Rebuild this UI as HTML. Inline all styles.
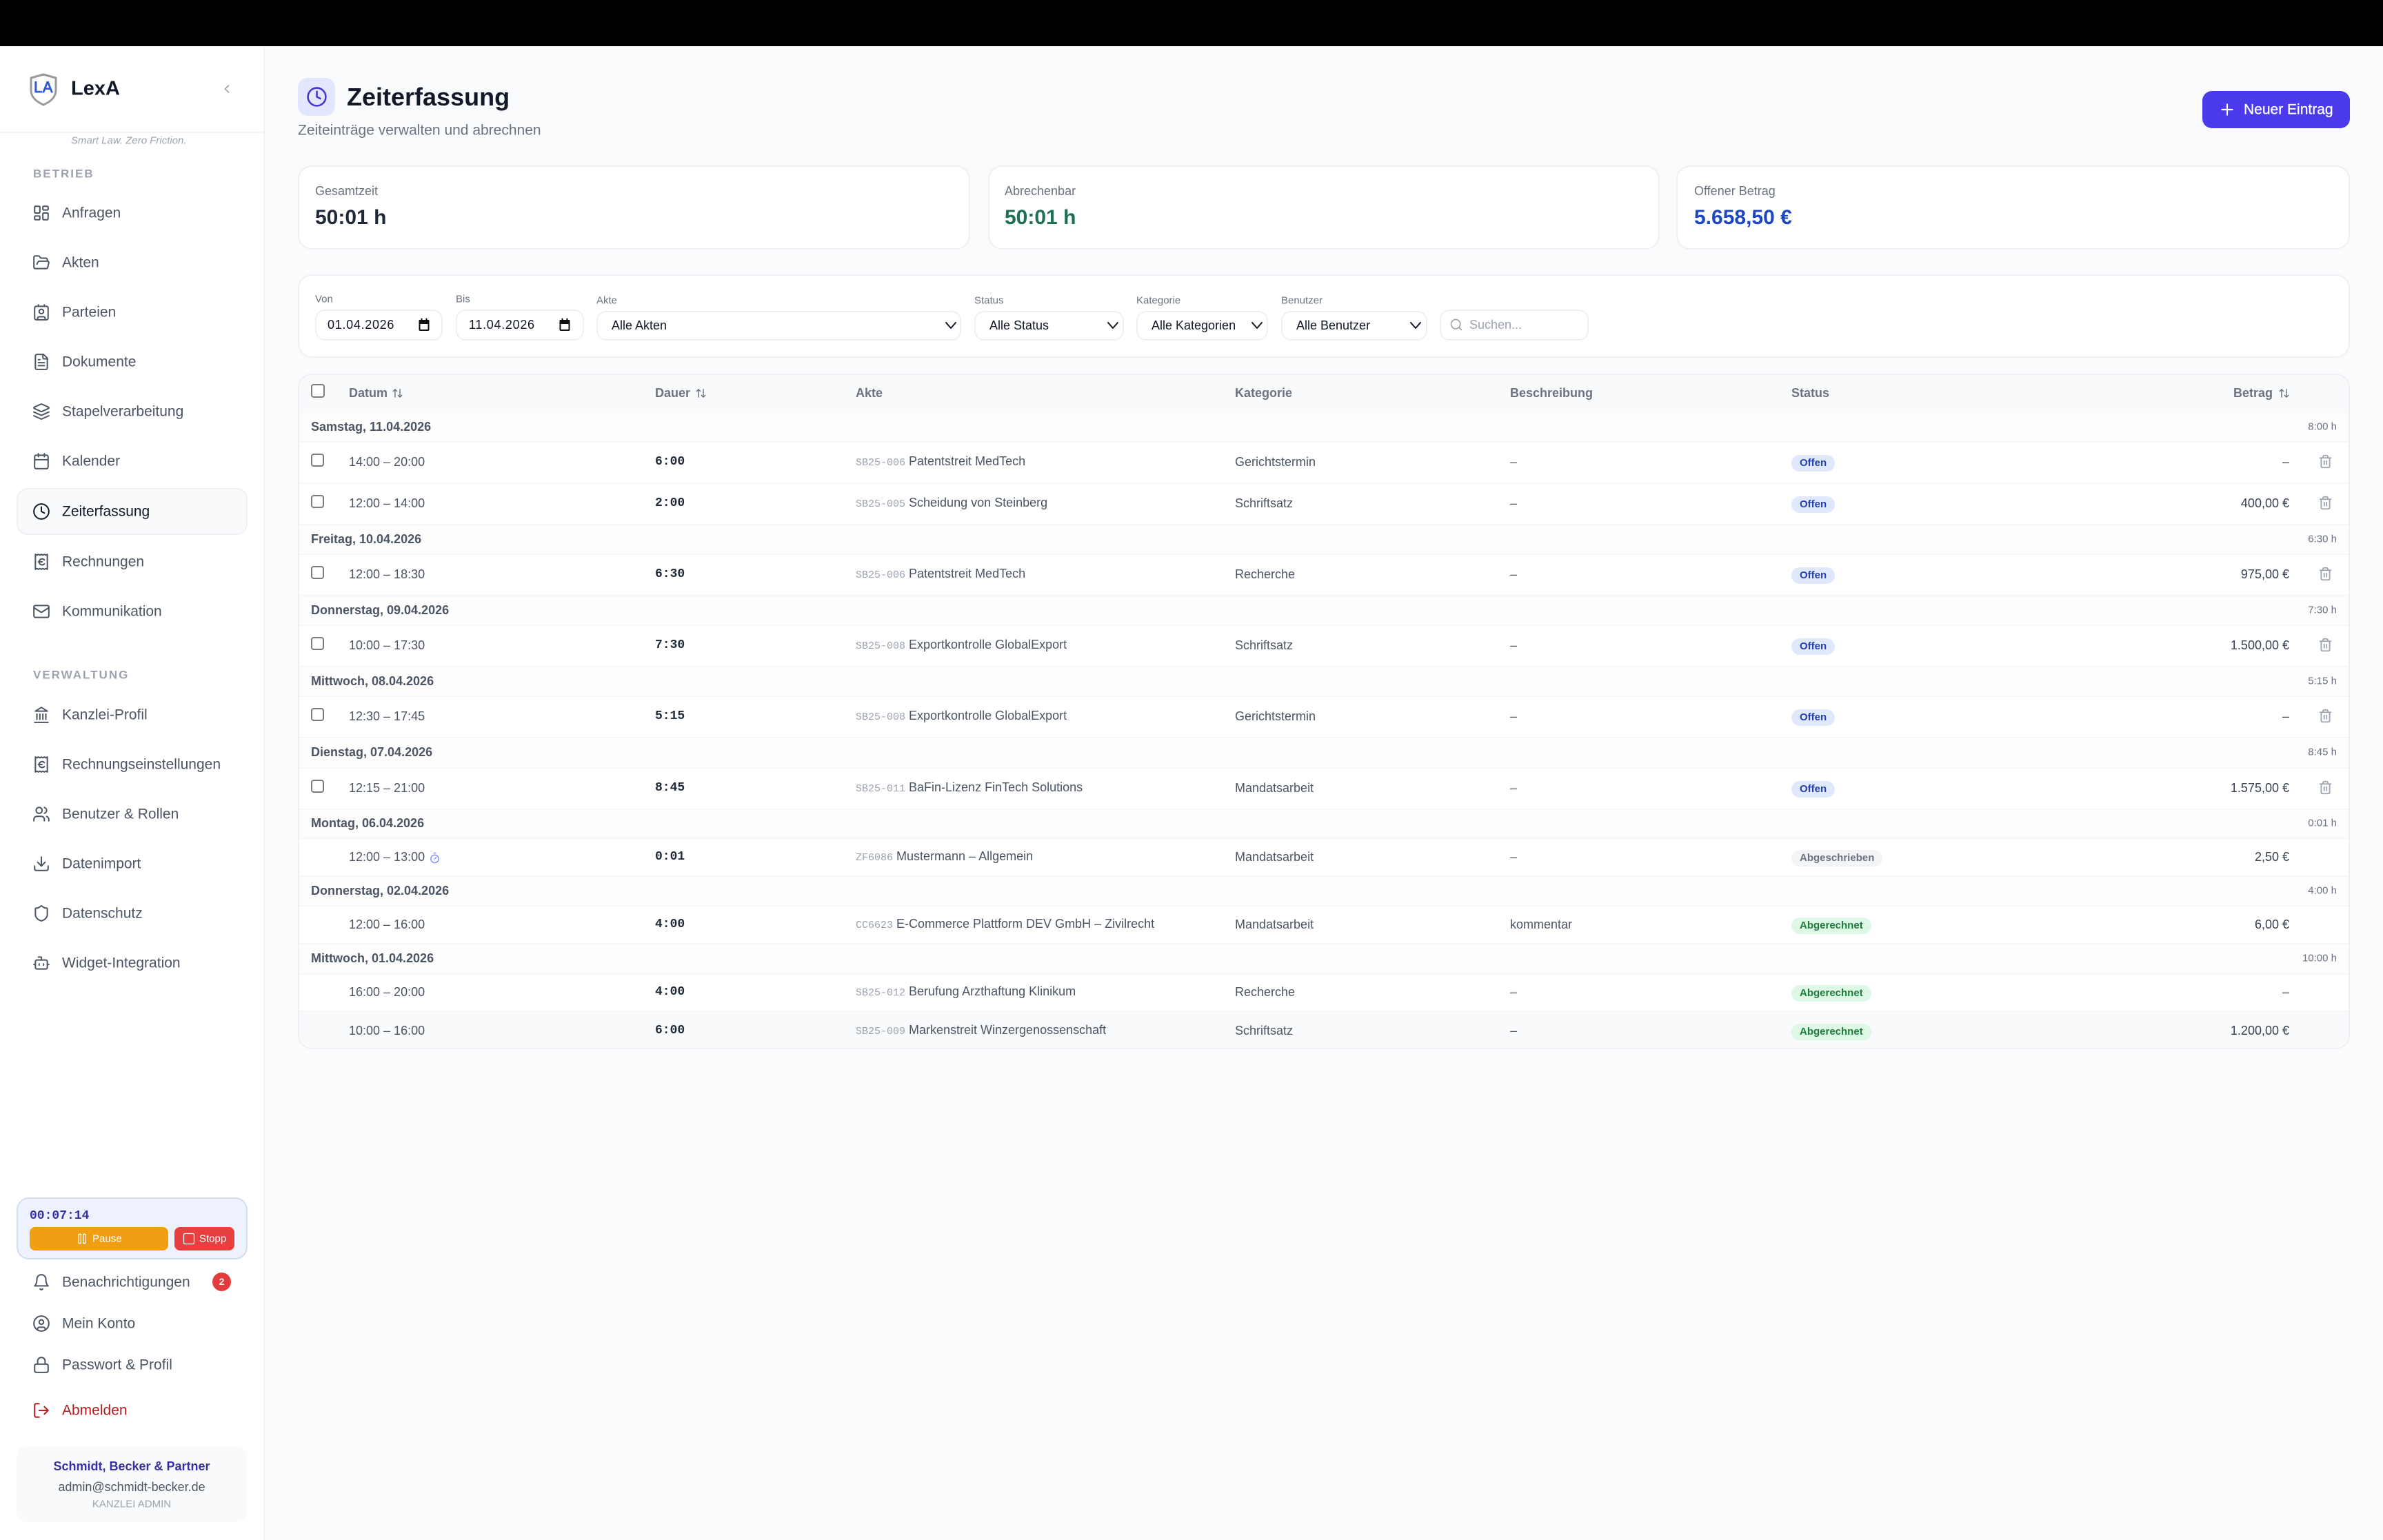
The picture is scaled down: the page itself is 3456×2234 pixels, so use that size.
<!DOCTYPE html>
<html lang="de"><head><meta charset="utf-8"><title>Zeiterfassung</title>
<style>
*{box-sizing:border-box;margin:0;padding:0}
html,body{width:3456px;height:2234px;overflow:hidden;background:#fafbfc;font-family:"Liberation Sans",Arial,sans-serif;color:#374151}
.a{position:absolute}
.t{position:absolute;white-space:nowrap;transform:translateY(-50%);line-height:1}
svg{position:absolute;fill:none;stroke:currentColor;stroke-width:2;stroke-linecap:round;stroke-linejoin:round;overflow:visible}
.n{left:90px;font-size:21px;color:#4b5563}
.i{left:47px;width:26px;height:26px;color:#4b5563;transform:translateY(-50%);stroke-width:1.85}
.card{position:absolute;background:#fff;border:2px solid #eff0f3;border-radius:20px}
.lb{font-size:15px;color:#6b7280}
.f{position:absolute;background:#fff;border:2px solid #eff0f3;border-radius:14px}
.ft{font-size:18px;color:#111827}
.ch{width:16px;height:10px;top:467px;color:#111827;stroke-width:2}
#tb{position:absolute;left:432px;top:542px;width:2976px;height:980px;background:#fff;border:2px solid #eff0f3;border-radius:20px;overflow:hidden}
.th{position:absolute;left:0;top:0;width:100%;height:55px;background:#f9fafc}
.th .t{top:26px;font-size:18px;font-weight:700;color:#6b7280}
.g,.r{position:absolute;left:0;width:100%}
.g{background:#fdfdfd;border-bottom:2px solid #f6f7f8}
.r{background:#fff;border-bottom:2px solid #f6f7f8}
.g .t{top:50%}
.r .t{top:calc(50% - 1px)}
.g b{position:absolute;left:17px;top:calc(50% - 1px);transform:translateY(-50%);font-size:18px;line-height:1;color:#4b5563;white-space:nowrap}
.g span{position:absolute;right:17px;top:calc(50% - 1px);transform:translateY(-50%);font-size:15px;line-height:1;color:#6b7280;white-space:nowrap}
.cb{position:absolute;left:17px;top:16px;width:19px;height:19px;border:2px solid #7d7d7d;border-radius:4px;background:#fff}
.c1{left:72px;font-size:18px;color:#4b5563}
.c2{left:516px;font:700 18px "Liberation Mono",monospace;color:#1f2937}
.c3{left:807px;font-size:18px;color:#4b5563}
.c3 i{font:normal 15px "Liberation Mono",monospace;color:#9ca3af}
.c4{left:1357px;font-size:18px;color:#4b5563}
.c5{left:1756px;font-size:18px;color:#4b5563}
.am{right:86px;left:auto;font-size:18px;color:#374151}
.bd{position:absolute;left:2164px;top:50%;height:24px;margin-top:-11px;border-radius:12px;padding:0 12px;font-size:15px;line-height:24px;font-weight:700;white-space:nowrap}
.o{background:#e0e8fb;color:#2540b0}
.ab{background:#def8e6;color:#1f7a3d}
.as{background:#f3f4f6;color:#6b7280}
.tr{width:21px;height:21px;left:2928px;top:50%;margin-top:-12px;color:#9ca3af}
.so{width:17px;height:17px;top:18px;color:#6b7280}
</style></head><body>
<svg width="0" height="0" style="position:absolute"><defs>
<symbol id="trash" viewBox="0 0 24 24"><path d="M3 6h18M19 6v14c0 1-1 2-2 2H7c-1 0-2-1-2-2V6M8 6V4c0-1 1-2 2-2h4c1 0 2 1 2 2v2M10 11v6M14 11v6"/></symbol>
<symbol id="sort" viewBox="0 0 24 24"><path d="m21 16-4 4-4-4M17 20V4M3 8l4-4 4 4M7 4v16"/></symbol>
<symbol id="receipt" viewBox="0 0 24 24"><path d="M4 2v20l2-1 2 1 2-1 2 1 2-1 2 1 2-1 2 1V2l-2 1-2-1-2 1-2-1-2 1-2-1-2 1Z"/><path d="M8 12h5M16 9.5a4 4 0 1 0 0 5.2"/></symbol>
</defs></svg>

<div class="a" style="left:0;top:0;width:3456px;height:67px;background:#000;z-index:5"></div>

<!-- Sidebar -->
<div class="a" style="left:0;top:66px;width:384px;height:2168px;background:#fff;border-right:2px solid #f3f4f6"></div>
<div class="a" style="left:0;top:191px;width:382px;height:2px;background:#f3f4f6"></div>
<svg style="left:42px;top:106px;width:42px;height:48px;color:#999;stroke-width:3" viewBox="0 0 42 48"><path d="M21 2 L39 7 V25 C39 36 30 42 21 46 C12 42 3 36 3 25 V7 Z"/><text x="21" y="28" text-anchor="middle" font-family="Liberation Sans" font-size="22" fill="#3557d0" stroke="#3557d0" stroke-width=".9" letter-spacing="0.5">LA</text></svg>
<div class="t" style="left:103px;top:129px;font-size:29px;font-weight:700;color:#111827">LexA</div>
<svg style="left:319px;top:119px;width:20px;height:20px;color:#9ca3af" viewBox="0 0 24 24"><path d="m15 18-6-6 6-6"/></svg>
<div class="t" style="left:103px;top:204px;font-size:15px;font-style:italic;color:#9ca3af">Smart Law. Zero Friction.</div>
<div class="t" style="left:48px;top:252px;font-size:17px;font-weight:700;letter-spacing:2px;color:#9ca3af">BETRIEB</div>

<svg class="i" style="top:309px" viewBox="0 0 24 24"><rect x="3" y="3" width="7" height="9" rx="1"/><rect x="14" y="3" width="7" height="5" rx="1"/><rect x="14" y="12" width="7" height="9" rx="1"/><rect x="3" y="16" width="7" height="5" rx="1"/></svg>
<div class="t n" style="top:309px">Anfragen</div>
<svg class="i" style="top:381px" viewBox="0 0 24 24"><path d="m6 14 1.5-2.9A2 2 0 0 1 9.24 10H20a2 2 0 0 1 1.94 2.5l-1.54 6a2 2 0 0 1-1.95 1.5H4a2 2 0 0 1-2-2V5a2 2 0 0 1 2-2h3.9a2 2 0 0 1 1.69.9l.81 1.2a2 2 0 0 0 1.67.9H18a2 2 0 0 1 2 2v2"/></svg>
<div class="t n" style="top:381px">Akten</div>
<svg class="i" style="top:453px" viewBox="0 0 24 24"><path d="M16 2v2M7 22v-2a2 2 0 0 1 2-2h6a2 2 0 0 1 2 2v2M8 2v2"/><circle cx="12" cy="11" r="3"/><rect x="3" y="4" width="18" height="18" rx="2"/></svg>
<div class="t n" style="top:453px">Parteien</div>
<svg class="i" style="top:525px" viewBox="0 0 24 24"><path d="M15 2H6a2 2 0 0 0-2 2v16a2 2 0 0 0 2 2h12a2 2 0 0 0 2-2V7Z"/><path d="M14 2v4a2 2 0 0 0 2 2h4M10 9H8M16 13H8M16 17H8"/></svg>
<div class="t n" style="top:525px">Dokumente</div>
<svg class="i" style="top:597px" viewBox="0 0 24 24"><path d="m12.83 2.18a2 2 0 0 0-1.66 0L2.6 6.08a1 1 0 0 0 0 1.83l8.58 3.91a2 2 0 0 0 1.66 0l8.58-3.9a1 1 0 0 0 0-1.83Z"/><path d="m22 17.65-9.17 4.16a2 2 0 0 1-1.66 0L2 17.65M22 12.65l-9.17 4.16a2 2 0 0 1-1.66 0L2 12.65"/></svg>
<div class="t n" style="top:597px">Stapelverarbeitung</div>
<svg class="i" style="top:669px" viewBox="0 0 24 24"><path d="M8 2v4M16 2v4"/><rect x="3" y="4" width="18" height="18" rx="2"/><path d="M3 10h18"/></svg>
<div class="t n" style="top:669px">Kalender</div>

<div class="a" style="left:24px;top:708px;width:335px;height:68px;background:#f9fafb;border:2px solid #f0f1f4;border-radius:16px"></div>
<svg class="i" style="top:742px;color:#111827" viewBox="0 0 24 24"><circle cx="12" cy="12" r="10"/><path d="M12 6v6l4 2"/></svg>
<div class="t n" style="top:742px;color:#111827">Zeiterfassung</div>
<svg class="i" style="top:815px" viewBox="0 0 24 24"><use href="#receipt"/></svg>
<div class="t n" style="top:815px">Rechnungen</div>
<svg class="i" style="top:887px" viewBox="0 0 24 24"><rect x="2" y="4" width="20" height="16" rx="2"/><path d="m22 7-8.97 5.7a1.94 1.94 0 0 1-2.06 0L2 7"/></svg>
<div class="t n" style="top:887px">Kommunikation</div>

<div class="t" style="left:48px;top:979px;font-size:17px;font-weight:700;letter-spacing:2px;color:#9ca3af">VERWALTUNG</div>
<svg class="i" style="top:1037px" viewBox="0 0 24 24"><path d="M3 22h18M6 18v-7M10 18v-7M14 18v-7M18 18v-7M12 2l8 5H4z"/></svg>
<div class="t n" style="top:1037px">Kanzlei-Profil</div>
<svg class="i" style="top:1109px" viewBox="0 0 24 24"><use href="#receipt"/></svg>
<div class="t n" style="top:1109px">Rechnungseinstellungen</div>
<svg class="i" style="top:1181px" viewBox="0 0 24 24"><path d="M16 21v-2a4 4 0 0 0-4-4H6a4 4 0 0 0-4 4v2"/><circle cx="9" cy="7" r="4"/><path d="M22 21v-2a4 4 0 0 0-3-3.87M16 3.13a4 4 0 0 1 0 7.75"/></svg>
<div class="t n" style="top:1181px">Benutzer &amp; Rollen</div>
<svg class="i" style="top:1253px" viewBox="0 0 24 24"><path d="M21 15v4a2 2 0 0 1-2 2H5a2 2 0 0 1-2-2v-4M7 10l5 5 5-5M12 15V3"/></svg>
<div class="t n" style="top:1253px">Datenimport</div>
<svg class="i" style="top:1325px" viewBox="0 0 24 24"><path d="M20 13c0 5-3.5 7.5-7.66 8.95a1 1 0 0 1-.67-.01C7.5 20.5 4 18 4 13V6a1 1 0 0 1 1-1c2 0 4.5-1.2 6.24-2.72a1.17 1.17 0 0 1 1.52 0C14.51 3.81 17 5 19 5a1 1 0 0 1 1 1z"/></svg>
<div class="t n" style="top:1325px">Datenschutz</div>
<svg class="i" style="top:1397px" viewBox="0 0 24 24"><path d="M12 8V4H8"/><rect x="4" y="8" width="16" height="12" rx="2"/><path d="M2 14h2M20 14h2M15 13v2M9 13v2"/></svg>
<div class="t n" style="top:1397px">Widget-Integration</div>

<!-- Timer -->
<div class="a" style="left:24px;top:1737px;width:335px;height:90px;background:#eef2ff;border:2px solid #d5daf3;border-radius:18px"></div>
<div class="t" style="left:43px;top:1764px;font:700 18px 'Liberation Mono',monospace;color:#3730a3">00:07:14</div>
<div class="a" style="left:43px;top:1780px;width:201px;height:34px;background:#f09e12;border-radius:8px"></div>
<svg style="left:109px;top:1787px;width:20px;height:20px;color:#fff;stroke-width:1.6" viewBox="0 0 24 24"><rect x="14" y="4" width="4" height="16" rx="1"/><rect x="6" y="4" width="4" height="16" rx="1"/></svg>
<div class="t" style="left:134px;top:1797px;font-size:15px;color:#fff">Pause</div>
<div class="a" style="left:253px;top:1780px;width:87px;height:34px;background:#e84040;border-radius:8px"></div>
<svg style="left:264px;top:1787px;width:20px;height:20px;color:#fff;stroke-width:1.6" viewBox="0 0 24 24"><rect x="3" y="3" width="18" height="18" rx="2"/></svg>
<div class="t" style="left:289px;top:1797px;font-size:15px;color:#fff">Stopp</div>

<svg class="i" style="top:1860px" viewBox="0 0 24 24"><path d="M6 8a6 6 0 0 1 12 0c0 7 3 9 3 9H3s3-2 3-9"/><path d="M10.3 21a1.94 1.94 0 0 0 3.4 0"/></svg>
<div class="t n" style="top:1860px">Benachrichtigungen</div>
<div class="a" style="left:308px;top:1846px;width:27px;height:27px;border-radius:50%;background:#e23b3b;color:#fff;font-size:14px;font-weight:700;line-height:27px;text-align:center">2</div>
<svg class="i" style="top:1920px" viewBox="0 0 24 24"><circle cx="12" cy="12" r="10"/><circle cx="12" cy="10" r="3"/><path d="M7 20.662V19a2 2 0 0 1 2-2h6a2 2 0 0 1 2 2v1.662"/></svg>
<div class="t n" style="top:1920px">Mein Konto</div>
<svg class="i" style="top:1980px" viewBox="0 0 24 24"><rect x="3" y="11" width="18" height="11" rx="2"/><path d="M7 11V7a5 5 0 0 1 10 0v4"/></svg>
<div class="t n" style="top:1980px">Passwort &amp; Profil</div>
<svg class="i" style="top:2046px;color:#b91c1c" viewBox="0 0 24 24"><path d="M9 21H5a2 2 0 0 1-2-2V5a2 2 0 0 1 2-2h4M16 17l5-5-5-5M21 12H9"/></svg>
<div class="t n" style="top:2046px;color:#b91c1c">Abmelden</div>

<div class="a" style="left:24px;top:2098px;width:334px;height:110px;background:#f9fafb;border-radius:16px"></div>
<div class="t" style="left:24px;width:334px;text-align:center;top:2127px;font-size:18px;font-weight:700;color:#3730a3">Schmidt, Becker &amp; Partner</div>
<div class="t" style="left:24px;width:334px;text-align:center;top:2157px;font-size:18px;color:#4b5563">admin@schmidt-becker.de</div>
<div class="t" style="left:24px;width:334px;text-align:center;top:2182px;font-size:15px;color:#9ca3af">KANZLEI ADMIN</div>

<!-- Header -->
<div class="a" style="left:432px;top:113px;width:54px;height:55px;background:#e0e7ff;border-radius:14px"></div>
<svg style="left:444px;top:125px;width:31px;height:31px;color:#4338ca" viewBox="0 0 24 24"><circle cx="12" cy="12" r="10"/><path d="M12 6v6l4 2"/></svg>
<div class="t" style="left:503px;top:141px;font-size:36px;font-weight:700;color:#111827">Zeiterfassung</div>
<div class="t" style="left:432px;top:189px;font-size:21px;color:#6b7280">Zeiteinträge verwalten und abrechnen</div>
<div class="a" style="left:3194px;top:132px;width:214px;height:54px;background:#4a3aea;border-radius:14px"></div>
<svg style="left:3217px;top:146px;width:26px;height:26px;color:#fff" viewBox="0 0 24 24"><path d="M5 12h14M12 5v14"/></svg>
<div class="t" style="left:3254px;top:159px;font-size:21px;color:#fff;-webkit-text-stroke:.3px #fff">Neuer Eintrag</div>

<!-- Stats -->
<div class="card" style="left:432px;top:240px;width:975px;height:122px"></div>
<div class="t" style="left:457px;top:277px;font-size:18px;color:#6b7280">Gesamtzeit</div>
<div class="t" style="left:457px;top:316px;font-size:30px;font-weight:700;color:#1f2937">50:01 h</div>
<div class="card" style="left:1433px;top:240px;width:974px;height:122px"></div>
<div class="t" style="left:1457px;top:277px;font-size:18px;color:#6b7280">Abrechenbar</div>
<div class="t" style="left:1457px;top:316px;font-size:30px;font-weight:700;color:#1e6f54">50:01 h</div>
<div class="card" style="left:2431px;top:240px;width:977px;height:122px"></div>
<div class="t" style="left:2457px;top:277px;font-size:18px;color:#6b7280">Offener Betrag</div>
<div class="t" style="left:2457px;top:316px;font-size:30px;font-weight:700;color:#1d46c0">5.658,50 €</div>

<!-- Filters -->
<div class="card" style="left:432px;top:398px;width:2976px;height:121px"></div>
<div class="t lb" style="left:457px;top:434px">Von</div>
<div class="f" style="left:457px;top:449px;width:185px;height:45px"></div>
<div class="t ft" style="left:475px;top:471px;letter-spacing:.7px">01.04.2026</div>
<svg style="left:607px;top:461px;width:16px;height:20px;color:#111" viewBox="0 0 16 20"><rect x="1.5" y="4" width="13" height="14" rx="1"/><path d="M1.5 4h13v4h-13z" fill="#111"/><path d="M4.5 1.5v3M11.5 1.5v3"/></svg>
<div class="t lb" style="left:661px;top:434px">Bis</div>
<div class="f" style="left:661px;top:449px;width:186px;height:45px"></div>
<div class="t ft" style="left:680px;top:471px;letter-spacing:.7px">11.04.2026</div>
<svg style="left:811px;top:461px;width:16px;height:20px;color:#111" viewBox="0 0 16 20"><rect x="1.5" y="4" width="13" height="14" rx="1"/><path d="M1.5 4h13v4h-13z" fill="#111"/><path d="M4.5 1.5v3M11.5 1.5v3"/></svg>
<div class="t lb" style="left:865px;top:436px">Akte</div>
<div class="f" style="left:865px;top:451px;width:529px;height:43px"></div>
<div class="t ft" style="left:887px;top:472px">Alle Akten</div>
<svg class="ch" style="left:1371px" viewBox="0 0 16 10"><path d="M1 1l7 8 7-8"/></svg>
<div class="t lb" style="left:1413px;top:436px">Status</div>
<div class="f" style="left:1413px;top:451px;width:217px;height:43px"></div>
<div class="t ft" style="left:1435px;top:472px">Alle Status</div>
<svg class="ch" style="left:1606px" viewBox="0 0 16 10"><path d="M1 1l7 8 7-8"/></svg>
<div class="t lb" style="left:1648px;top:436px">Kategorie</div>
<div class="f" style="left:1648px;top:451px;width:191px;height:43px"></div>
<div class="t ft" style="left:1670px;top:472px">Alle Kategorien</div>
<svg class="ch" style="left:1815px" viewBox="0 0 16 10"><path d="M1 1l7 8 7-8"/></svg>
<div class="t lb" style="left:1858px;top:436px">Benutzer</div>
<div class="f" style="left:1858px;top:451px;width:212px;height:43px"></div>
<div class="t ft" style="left:1880px;top:472px">Alle Benutzer</div>
<svg class="ch" style="left:2045px" viewBox="0 0 16 10"><path d="M1 1l7 8 7-8"/></svg>
<div class="f" style="left:2088px;top:449px;width:216px;height:45px"></div>
<svg style="left:2102px;top:461px;width:20px;height:20px;color:#9ca3af" viewBox="0 0 24 24"><circle cx="11" cy="11" r="8"/><path d="m21 21-4.3-4.3"/></svg>
<div class="t ft" style="left:2131px;top:471px;color:#9ca3af">Suchen...</div>

<!-- Table -->
<div id="tb">
<div class="th">
<div class="cb" style="top:13px;width:20px;height:20px"></div>
<div class="t" style="left:72px">Datum</div><svg class="so" style="left:134px"><use href="#sort"/></svg>
<div class="t" style="left:516px">Dauer</div><svg class="so" style="left:574px"><use href="#sort"/></svg>
<div class="t" style="left:807px">Akte</div>
<div class="t" style="left:1357px">Kategorie</div>
<div class="t" style="left:1756px">Beschreibung</div>
<div class="t" style="left:2164px">Status</div>
<div class="t" style="left:2805px">Betrag</div><svg class="so" style="left:2870px"><use href="#sort"/></svg>
</div>

<div class="g" style="top:55px;height:43px"><b>Samstag, 11.04.2026</b><span>8:00 h</span></div>
<div class="r" style="top:98px;height:60px"><div class="cb"></div><div class="t c1">14:00 – 20:00</div><div class="t c2">6:00</div><div class="t c3"><i>SB25-006</i> Patentstreit MedTech</div><div class="t c4">Gerichtstermin</div><div class="t c5">–</div><div class="bd o">Offen</div><div class="t am">–</div><svg class="tr"><use href="#trash"/></svg></div>
<div class="r" style="top:158px;height:60px"><div class="cb"></div><div class="t c1">12:00 – 14:00</div><div class="t c2">2:00</div><div class="t c3"><i>SB25-005</i> Scheidung von Steinberg</div><div class="t c4">Schriftsatz</div><div class="t c5">–</div><div class="bd o">Offen</div><div class="t am">400,00 €</div><svg class="tr"><use href="#trash"/></svg></div>

<div class="g" style="top:218px;height:43px"><b>Freitag, 10.04.2026</b><span>6:30 h</span></div>
<div class="r" style="top:261px;height:60px"><div class="cb"></div><div class="t c1">12:00 – 18:30</div><div class="t c2">6:30</div><div class="t c3"><i>SB25-006</i> Patentstreit MedTech</div><div class="t c4">Recherche</div><div class="t c5">–</div><div class="bd o">Offen</div><div class="t am">975,00 €</div><svg class="tr"><use href="#trash"/></svg></div>

<div class="g" style="top:321px;height:43px"><b>Donnerstag, 09.04.2026</b><span>7:30 h</span></div>
<div class="r" style="top:364px;height:60px"><div class="cb"></div><div class="t c1">10:00 – 17:30</div><div class="t c2">7:30</div><div class="t c3"><i>SB25-008</i> Exportkontrolle GlobalExport</div><div class="t c4">Schriftsatz</div><div class="t c5">–</div><div class="bd o">Offen</div><div class="t am">1.500,00 €</div><svg class="tr"><use href="#trash"/></svg></div>

<div class="g" style="top:424px;height:43px"><b>Mittwoch, 08.04.2026</b><span>5:15 h</span></div>
<div class="r" style="top:467px;height:60px"><div class="cb"></div><div class="t c1">12:30 – 17:45</div><div class="t c2">5:15</div><div class="t c3"><i>SB25-008</i> Exportkontrolle GlobalExport</div><div class="t c4">Gerichtstermin</div><div class="t c5">–</div><div class="bd o">Offen</div><div class="t am">–</div><svg class="tr"><use href="#trash"/></svg></div>

<div class="g" style="top:527px;height:44px"><b>Dienstag, 07.04.2026</b><span>8:45 h</span></div>
<div class="r" style="top:571px;height:60px"><div class="cb"></div><div class="t c1">12:15 – 21:00</div><div class="t c2">8:45</div><div class="t c3"><i>SB25-011</i> BaFin-Lizenz FinTech Solutions</div><div class="t c4">Mandatsarbeit</div><div class="t c5">–</div><div class="bd o">Offen</div><div class="t am">1.575,00 €</div><svg class="tr"><use href="#trash"/></svg></div>

<div class="g" style="top:631px;height:42px"><b>Montag, 06.04.2026</b><span>0:01 h</span></div>
<div class="r" style="top:673px;height:55px"><div class="t c1">12:00 – 13:00</div><svg style="left:188px;top:19px;width:17px;height:17px;color:#818cf8" viewBox="0 0 24 24"><path d="M10 2h4M12 14l3-3"/><circle cx="12" cy="14" r="8"/></svg><div class="t c2">0:01</div><div class="t c3"><i>ZF6086</i> Mustermann – Allgemein</div><div class="t c4">Mandatsarbeit</div><div class="t c5">–</div><div class="bd as">Abgeschrieben</div><div class="t am">2,50 €</div></div>

<div class="g" style="top:728px;height:43px"><b>Donnerstag, 02.04.2026</b><span>4:00 h</span></div>
<div class="r" style="top:771px;height:55px"><div class="t c1">12:00 – 16:00</div><div class="t c2">4:00</div><div class="t c3"><i>CC6623</i> E-Commerce Plattform DEV GmbH – Zivilrecht</div><div class="t c4">Mandatsarbeit</div><div class="t c5">kommentar</div><div class="bd ab">Abgerechnet</div><div class="t am">6,00 €</div></div>

<div class="g" style="top:826px;height:44px"><b>Mittwoch, 01.04.2026</b><span>10:00 h</span></div>
<div class="r" style="top:870px;height:54px"><div class="t c1">16:00 – 20:00</div><div class="t c2">4:00</div><div class="t c3"><i>SB25-012</i> Berufung Arzthaftung Klinikum</div><div class="t c4">Recherche</div><div class="t c5">–</div><div class="bd ab">Abgerechnet</div><div class="t am">–</div></div>
<div class="r" style="top:924px;height:55px;background:#f9fafb;border-bottom:0"><div class="t c1">10:00 – 16:00</div><div class="t c2">6:00</div><div class="t c3"><i>SB25-009</i> Markenstreit Winzergenossenschaft</div><div class="t c4">Schriftsatz</div><div class="t c5">–</div><div class="bd ab">Abgerechnet</div><div class="t am">1.200,00 €</div></div>
</div>
</body></html>
